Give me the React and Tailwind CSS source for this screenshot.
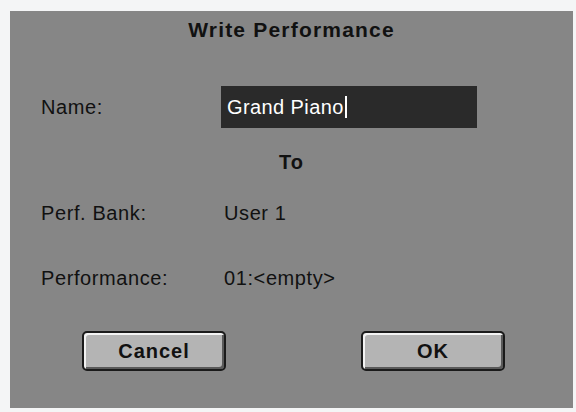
export default function App() {
  const font = { fontFamily: '"Liberation Sans", Arial, sans-serif' };
  return (
    <div className="w-[576px] h-[412px] bg-[#f4f5f6] pt-[11px] pl-[10px] pr-[3px] pb-[4px]" style={font}>
      <div className="h-full bg-[#868686] flex flex-col text-[#111]">
        {/* Title */}
        <div className="h-[38px] flex items-center justify-center text-[21px] font-bold tracking-[1.2px]">
          Write Performance
        </div>

        {/* Name */}
        <div className="mt-[37px] h-[42px] flex items-center">
          <span className="w-[211px] pl-[31px] text-[20px] tracking-[0.6px]">Name:</span>
          <div className="w-[256px] h-full bg-[#2a2a2a] flex items-center pl-[6px] text-white text-[20px] tracking-[0.4px]">
            Grand Piano
            <span className="inline-block w-[2px] h-[22px] bg-white ml-[1px]"></span>
          </div>
        </div>

        {/* To */}
        <div className="mt-[21px] h-[26px] flex items-center justify-center text-[20px] font-bold tracking-[1px]">
          To
        </div>

        {/* Perf. Bank */}
        <div className="mt-[25px] h-[26px] flex items-center text-[20px] tracking-[0.6px]">
          <span className="w-[214px] pl-[31px]">Perf. Bank:</span>
          <span>User 1</span>
        </div>

        {/* Performance */}
        <div className="mt-[39px] h-[26px] flex items-center text-[20px] tracking-[0.6px]">
          <span className="w-[214px] pl-[31px]">Performance:</span>
          <span>01:&lt;empty&gt;</span>
        </div>

        {/* Buttons */}
        <div className="mt-[40px] flex pl-[72px] gap-[135px]">
          <button className="w-[144px] h-[40px] rounded-[5px] border-2 border-[#1a1a1a] bg-[#b4b4b4] shadow-[inset_2px_2px_0_#f2f2f2,inset_-2px_-2px_0_#5a5a5a] text-[20px] font-bold tracking-[1px] text-[#111]">
            Cancel
          </button>
          <button className="w-[144px] h-[40px] rounded-[5px] border-2 border-[#1a1a1a] bg-[#b4b4b4] shadow-[inset_2px_2px_0_#f2f2f2,inset_-2px_-2px_0_#5a5a5a] text-[20px] font-bold tracking-[1px] text-[#111]">
            OK
          </button>
        </div>
      </div>
    </div>
  );
}
